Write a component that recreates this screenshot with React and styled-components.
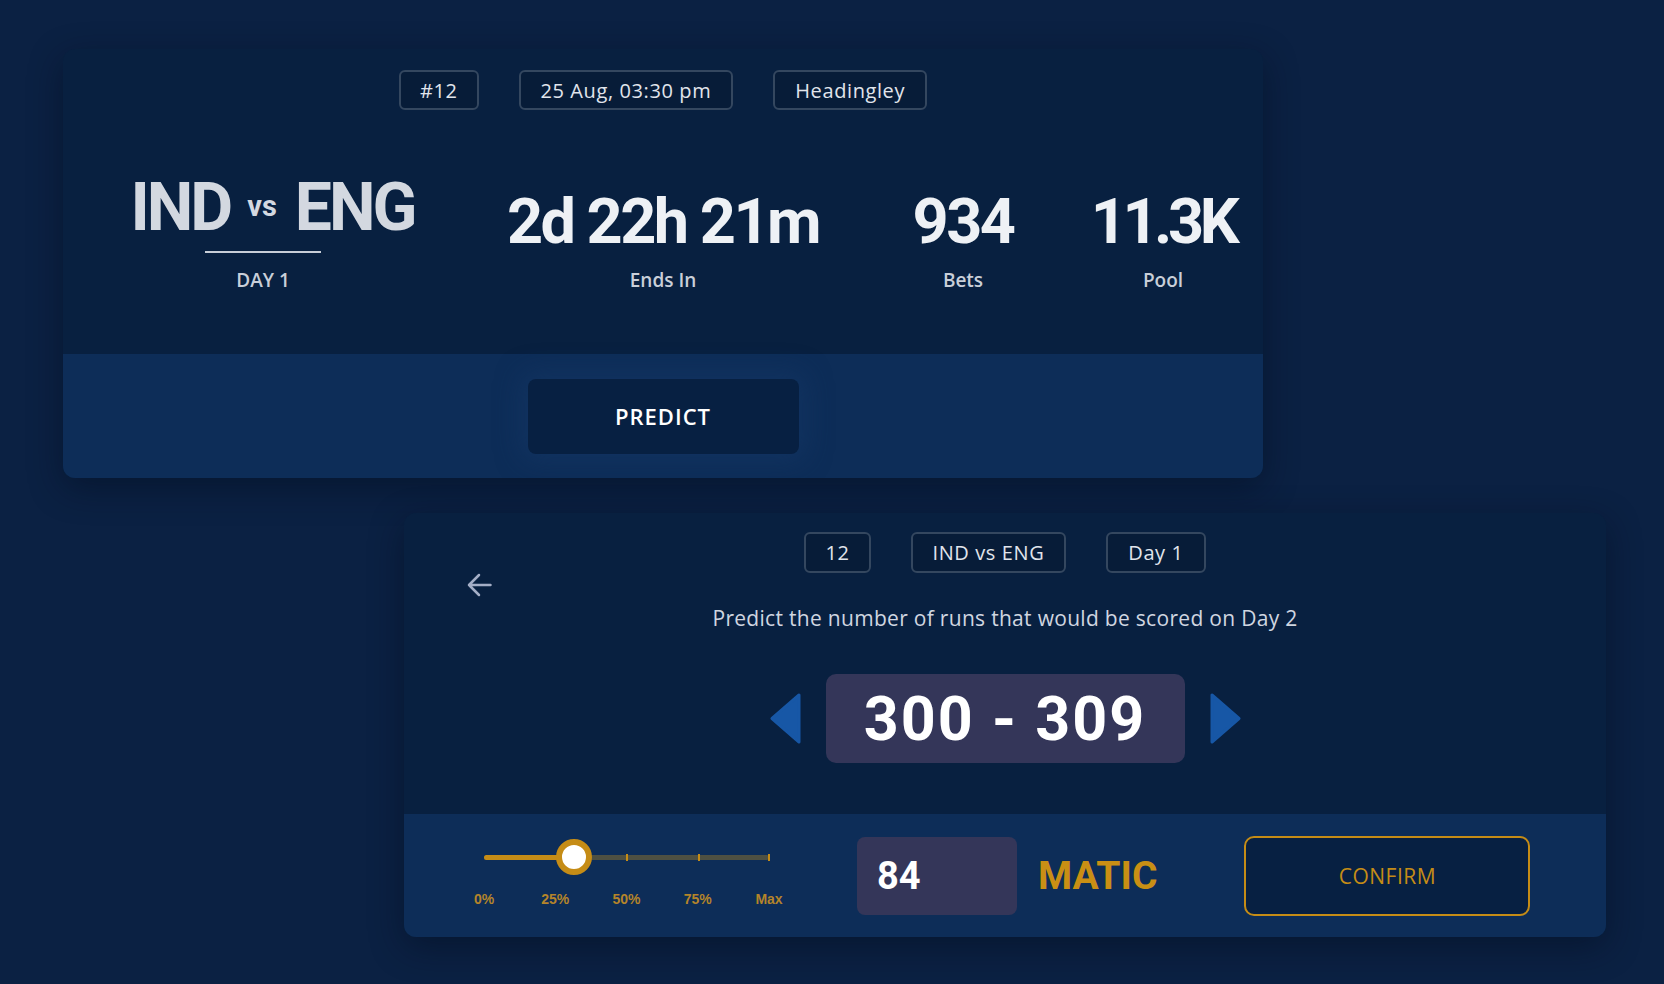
import React from 'react';
import styled, { createGlobalStyle } from 'styled-components';

const GlobalStyle = createGlobalStyle`
  html, body {
    margin: 0;
    background: #0b2143;
  }
  body {
    font-family: 'Open Sans', 'Liberation Sans', sans-serif;
    color: #dfe3ea;
  }
`;

const Page = styled.div`
  min-height: 984px;
  box-sizing: border-box;
  padding: 49px 0 0 63px;
  display: flex;
  flex-direction: column;
  align-items: flex-start;
`;

const Card = styled.section`
  position: relative;
  width: ${(p) => p.$width}px;
  margin: ${(p) => p.$margin || '0'};
  background: #082040;
  border-radius: 12px;
  overflow: hidden;
  box-shadow: 0 10px 34px rgba(2, 10, 26, 0.45);
`;

const CardBody = styled.div`
  position: relative;
  padding: ${(p) => p.$padding};
`;

const CardFooter = styled.div`
  height: ${(p) => p.$height}px;
  background: #0d2d58;
  display: flex;
  align-items: ${(p) => (p.$start ? 'flex-start' : 'center')};
  justify-content: ${(p) => (p.$start ? 'flex-start' : 'center')};
  padding-left: ${(p) => p.$padLeft || 0}px;
  box-sizing: border-box;
`;

const TagRow = styled.div`
  display: flex;
  justify-content: center;
  gap: ${(p) => p.$gap}px;
`;

const Tag = styled.span`
  height: ${(p) => p.$height || 40}px;
  box-sizing: border-box;
  padding: 0 ${(p) => p.$pad || 20}px;
  display: inline-flex;
  align-items: center;
  border: 2px solid #34475f;
  border-radius: 6px;
  background: #071c38;
  font-size: 20px;
  font-weight: 500;
  letter-spacing: 0.6px;
  color: #e1e5ec;
`;

/* ---------- match card ---------- */

const StatsRow = styled.div`
  margin-top: 63px;
  padding-left: 30px;
  display: grid;
  grid-template-columns: 340px 380px 140px 180px;
  column-gap: 40px;
  align-items: end;
`;

const Stat = styled.div`
  display: flex;
  flex-direction: column;
  align-items: center;
`;

const Teams = styled.div`
  display: flex;
  align-items: baseline;
  margin-left: 19px;
  font-family: Roboto, 'Liberation Sans', sans-serif;
  font-weight: 700;
  font-size: 66px;
  line-height: 69px;
  letter-spacing: -3px;
  color: #d3d8e0;
  white-space: nowrap;
`;

const Versus = styled.span`
  font-size: 29px;
  line-height: 1;
  letter-spacing: 0;
  margin: 0 18px 0 17px;
  position: relative;
  top: -14px;
`;

const Underline = styled.div`
  width: 116px;
  height: 2px;
  margin-top: 9px;
  background: #c8ced8;
`;

const BigValue = styled.div`
  font-family: Roboto, 'Liberation Sans', sans-serif;
  font-weight: 700;
  font-size: 63px;
  line-height: 1;
  letter-spacing: ${(p) => p.$tight || -0.04}em;
  color: #eef1f5;
  white-space: nowrap;
`;

const StatLabel = styled.div`
  margin-top: 15px;
  font-size: 19px;
  line-height: 24px;
  font-weight: 600;
  color: #c9cfd9;
`;

const PredictButton = styled.button`
  width: 271px;
  height: 75px;
  border: none;
  border-radius: 8px;
  background: #072042;
  color: #ffffff;
  font-family: 'Open Sans', 'Liberation Sans', sans-serif;
  font-size: 22px;
  font-weight: 600;
  letter-spacing: 1px;
  box-shadow: 0 0 26px 6px rgba(22, 56, 104, 0.55);
  cursor: pointer;
`;

/* ---------- prediction card ---------- */

const BackButton = styled.button`
  position: absolute;
  left: 63px;
  top: 60px;
  padding: 0;
  border: none;
  background: none;
  display: flex;
  cursor: pointer;
`;

const Prompt = styled.p`
  margin: 31px 0 0;
  text-align: center;
  font-size: 21px;
  line-height: 28px;
  font-weight: 500;
  letter-spacing: 0.3px;
  color: #d0d6e0;
`;

const PickerRow = styled.div`
  margin-top: 42px;
  display: flex;
  align-items: center;
  justify-content: center;
  gap: 25px;
`;

const ArrowButton = styled.button`
  padding: 0;
  border: none;
  background: none;
  display: flex;
  cursor: pointer;
`;

const RangeBox = styled.div`
  width: 359px;
  height: 89px;
  border-radius: 10px;
  background: #343659;
  display: flex;
  align-items: center;
  justify-content: center;
  font-family: Roboto, 'Liberation Sans', sans-serif;
  font-weight: 700;
  font-size: 61px;
  letter-spacing: 2px;
  color: #ffffff;
  white-space: pre;
`;

const Slider = styled.div`
  width: 285px;
  margin-top: 25px;
`;

const SliderArea = styled.div`
  height: 36px;
  display: flex;
  align-items: center;
`;

const Rail = styled.div`
  position: relative;
  width: 100%;
  height: 5px;
  border-radius: 3px;
  background: #4e5042;
`;

const Fill = styled.div`
  position: absolute;
  left: 0;
  top: 0;
  bottom: 0;
  border-radius: 3px;
  background: #c58c16;
`;

const Tick = styled.span`
  position: absolute;
  top: -1px;
  width: 2px;
  height: 7px;
  margin-left: -1px;
  background: #c58c16;
`;

const Thumb = styled.span`
  position: absolute;
  top: 50%;
  width: 36px;
  height: 36px;
  box-sizing: border-box;
  border-radius: 50%;
  border: 6px solid #c58c16;
  background: #ffffff;
  transform: translate(-50%, -50%);
`;

const Marks = styled.div`
  margin-top: 16px;
  display: flex;
  justify-content: space-between;
`;

const Mark = styled.span`
  width: 0;
  display: flex;
  justify-content: center;
  white-space: nowrap;
  font-family: 'Liberation Sans', Arial, sans-serif;
  font-size: 14px;
  line-height: 16px;
  font-weight: 700;
  color: #b4842a;
`;

const AmountBox = styled.div`
  width: 160px;
  height: 78px;
  margin: 23px 0 0 88px;
  box-sizing: border-box;
  padding-left: 20px;
  border-radius: 8px;
  background: #343659;
  display: flex;
  align-items: center;
  font-family: Roboto, 'Liberation Sans', sans-serif;
  font-weight: 700;
  font-size: 38px;
  color: #ffffff;
`;

const Currency = styled.div`
  margin: 0 0 0 21px;
  height: 123px;
  display: flex;
  align-items: center;
  font-family: Roboto, 'Liberation Sans', sans-serif;
  font-weight: 700;
  font-size: 39px;
  color: #c98f14;
`;

const ConfirmButton = styled.button`
  width: 286px;
  height: 80px;
  margin: 22px 0 0 87px;
  border: 2px solid #c58c16;
  border-radius: 10px;
  background: #072042;
  color: #c58c16;
  font-family: 'Open Sans', 'Liberation Sans', sans-serif;
  font-size: 21px;
  font-weight: 500;
  letter-spacing: 0.5px;
  cursor: pointer;
`;

const BackArrow = () => (
  <svg width="25" height="24" viewBox="0 0 25 24" fill="none">
    <path
      d="M23.5 12H2M12 2 2 12l10 10"
      stroke="#a4aec6"
      strokeWidth="2.5"
      strokeLinecap="round"
      strokeLinejoin="round"
    />
  </svg>
);

const Caret = ({ dir }) => (
  <svg width="31" height="51" viewBox="0 0 31 51">
    <path
      d={dir === 'left' ? 'M29 2 29 49 2 25.5Z' : 'M2 2 2 49 29 25.5Z'}
      fill="#1757a6"
      stroke="#1757a6"
      strokeWidth="3"
      strokeLinejoin="round"
    />
  </svg>
);

const ticks = [50.2, 75.4, 100];
const marks = ['0%', '25%', '50%', '75%', 'Max'];

export default function App() {
  const stake = 31.6;

  return (
    <>
      <GlobalStyle />
      <Page>
        <Card $width={1200}>
          <CardBody $padding="21px 0 62px">
            <TagRow $gap={40}>
              <Tag $pad={19}>#12</Tag>
              <Tag>25 Aug, 03:30 pm</Tag>
              <Tag>Headingley</Tag>
            </TagRow>
            <StatsRow>
              <Stat>
                <Teams>
                  IND<Versus>vs</Versus>ENG
                </Teams>
                <Underline />
                <StatLabel>DAY 1</StatLabel>
              </Stat>
              <Stat>
                <BigValue>2d 22h 21m</BigValue>
                <StatLabel>Ends In</StatLabel>
              </Stat>
              <Stat>
                <BigValue>934</BigValue>
                <StatLabel>Bets</StatLabel>
              </Stat>
              <Stat>
                <BigValue $tight={-0.07}>11.3K</BigValue>
                <StatLabel>Pool</StatLabel>
              </Stat>
            </StatsRow>
          </CardBody>
          <CardFooter $height={124}>
            <PredictButton>PREDICT</PredictButton>
          </CardFooter>
        </Card>

        <Card $width={1202} $margin="35px 0 0 341px">
          <CardBody $padding="19px 0 51px">
            <BackButton aria-label="Back">
              <BackArrow />
            </BackButton>
            <TagRow $gap={40}>
              <Tag $height={41} $pad={19}>12</Tag>
              <Tag $height={41}>IND vs ENG</Tag>
              <Tag $height={41}>Day 1</Tag>
            </TagRow>
            <Prompt>Predict the number of runs that would be scored on Day 2</Prompt>
            <PickerRow>
              <ArrowButton aria-label="Previous range">
                <Caret dir="left" />
              </ArrowButton>
              <RangeBox>300 - 309</RangeBox>
              <ArrowButton aria-label="Next range">
                <Caret dir="right" />
              </ArrowButton>
            </PickerRow>
          </CardBody>
          <CardFooter $height={123} $start $padLeft={80}>
            <Slider>
              <SliderArea>
                <Rail>
                  <Fill style={{ width: `${stake}%` }} />
                  {ticks.map((t) => (
                    <Tick key={t} style={{ left: `${t}%` }} />
                  ))}
                  <Thumb style={{ left: `${stake}%` }} />
                </Rail>
              </SliderArea>
              <Marks>
                {marks.map((m) => (
                  <Mark key={m}>{m}</Mark>
                ))}
              </Marks>
            </Slider>
            <AmountBox>84</AmountBox>
            <Currency>MATIC</Currency>
            <ConfirmButton>CONFIRM</ConfirmButton>
          </CardFooter>
        </Card>
      </Page>
    </>
  );
}
